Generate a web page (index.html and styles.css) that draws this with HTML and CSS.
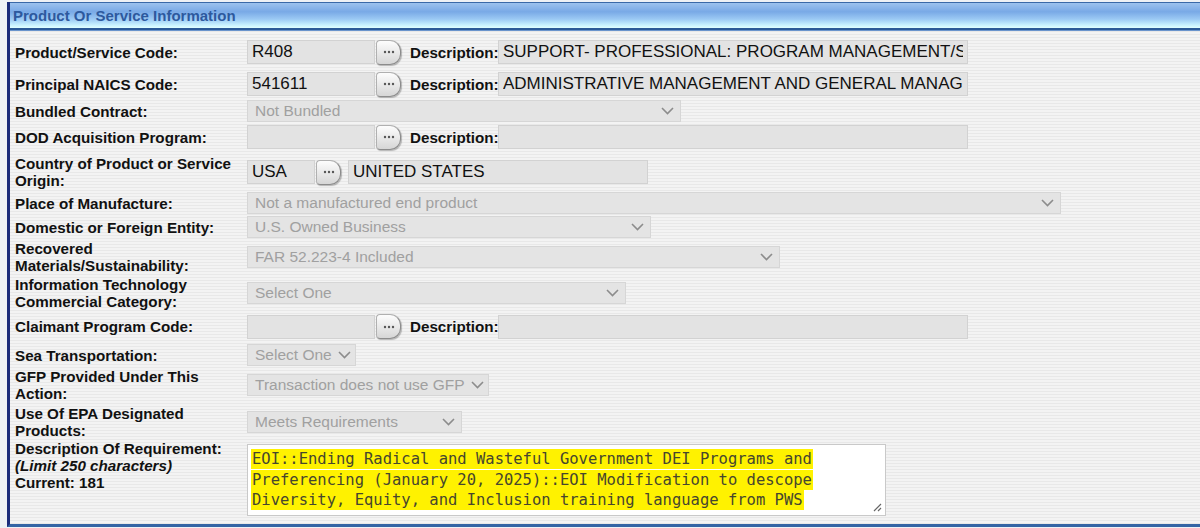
FILE: index.html
```html
<!DOCTYPE html>
<html lang="en">
<head>
    <meta charset="UTF-8">
    <meta name="viewport" content="width=device-width, initial-scale=1.0">
    <title>Product Or Service Information</title>
    <link rel="stylesheet" href="styles.css">
</head>
<body>
    <div class="page">
        <div class="panel">
            <div class="panel-head">Product Or Service Information</div>
            <div class="form-grid">
                <!-- Product/Service Code -->
                <div class="lbl">Product/Service Code:</div>
                <div class="ctl">
                    <input class="txt code" type="text" value="R408" readonly>
                    <span class="picker"><svg width="12" height="4" viewBox="0 0 12 4"><circle cx="2" cy="2" r="1.2"/><circle cx="6" cy="2" r="1.2"/><circle cx="10" cy="2" r="1.2"/></svg></span>
                    <span class="desc-lbl">Description:</span>
                    <input class="txt desc" type="text" value="SUPPORT- PROFESSIONAL: PROGRAM MANAGEMENT/SUPPORT" readonly>
                </div>

                <!-- NAICS -->
                <div class="lbl">Principal NAICS Code:</div>
                <div class="ctl">
                    <input class="txt code" type="text" value="541611" readonly>
                    <span class="picker"><svg width="12" height="4" viewBox="0 0 12 4"><circle cx="2" cy="2" r="1.2"/><circle cx="6" cy="2" r="1.2"/><circle cx="10" cy="2" r="1.2"/></svg></span>
                    <span class="desc-lbl">Description:</span>
                    <input class="txt desc" type="text" value="ADMINISTRATIVE MANAGEMENT AND GENERAL MANAGEMENT CONSULTING SERVICES" readonly>
                </div>

                <div class="lbl">Bundled Contract:</div>
                <div class="ctl">
                    <div class="sel" style="width: 434px">Not Bundled<svg width="13" height="8" viewBox="0 0 13 8"><path d="M1 1l5.5 5.5L12 1"/></svg></div>
                </div>

                <div class="lbl">DOD Acquisition Program:</div>
                <div class="ctl">
                    <input class="txt code" type="text" value="" readonly>
                    <span class="picker"><svg width="12" height="4" viewBox="0 0 12 4"><circle cx="2" cy="2" r="1.2"/><circle cx="6" cy="2" r="1.2"/><circle cx="10" cy="2" r="1.2"/></svg></span>
                    <span class="desc-lbl">Description:</span>
                    <input class="txt desc" type="text" value="" readonly>
                </div>

                <div class="lbl">Country of Product or Service Origin:</div>
                <div class="ctl">
                    <input class="txt country" type="text" value="USA" readonly>
                    <span class="picker"><svg width="12" height="4" viewBox="0 0 12 4"><circle cx="2" cy="2" r="1.2"/><circle cx="6" cy="2" r="1.2"/><circle cx="10" cy="2" r="1.2"/></svg></span>
                    <input class="txt country-name" type="text" value="UNITED STATES" readonly>
                </div>

                <div class="lbl">Place of Manufacture:</div>
                <div class="ctl">
                    <div class="sel" style="width: 814px">Not a manufactured end product<svg width="13" height="8" viewBox="0 0 13 8"><path d="M1 1l5.5 5.5L12 1"/></svg></div>
                </div>

                <div class="lbl">Domestic or Foreign Entity:</div>
                <div class="ctl">
                    <div class="sel" style="width: 404px">U.S. Owned Business<svg width="13" height="8" viewBox="0 0 13 8"><path d="M1 1l5.5 5.5L12 1"/></svg></div>
                </div>

                <div class="lbl">Recovered Materials/Sustainability:</div>
                <div class="ctl">
                    <div class="sel" style="width: 533px">FAR 52.223-4 Included<svg width="13" height="8" viewBox="0 0 13 8"><path d="M1 1l5.5 5.5L12 1"/></svg></div>
                </div>

                <div class="lbl">Information Technology Commercial Category:</div>
                <div class="ctl">
                    <div class="sel" style="width: 379px">Select One<svg width="13" height="8" viewBox="0 0 13 8"><path d="M1 1l5.5 5.5L12 1"/></svg></div>
                </div>

                <div class="lbl">Claimant Program Code:</div>
                <div class="ctl">
                    <input class="txt code" type="text" value="" readonly>
                    <span class="picker"><svg width="12" height="4" viewBox="0 0 12 4"><circle cx="2" cy="2" r="1.2"/><circle cx="6" cy="2" r="1.2"/><circle cx="10" cy="2" r="1.2"/></svg></span>
                    <span class="desc-lbl">Description:</span>
                    <input class="txt desc" type="text" value="" readonly>
                </div>

                <div class="lbl">Sea Transportation:</div>
                <div class="ctl">
                    <div class="sel fit">Select One<svg width="13" height="8" viewBox="0 0 13 8"><path d="M1 1l5.5 5.5L12 1"/></svg></div>
                </div>

                <div class="lbl">GFP Provided Under This Action:</div>
                <div class="ctl">
                    <div class="sel fit">Transaction does not use GFP<svg width="13" height="8" viewBox="0 0 13 8"><path d="M1 1l5.5 5.5L12 1"/></svg></div>
                </div>

                <div class="lbl">Use Of EPA Designated Products:</div>
                <div class="ctl">
                    <div class="sel" style="width: 215px">Meets Requirements<svg width="13" height="8" viewBox="0 0 13 8"><path d="M1 1l5.5 5.5L12 1"/></svg></div>
                </div>

                <div class="lbl top">
                    Description Of Requirement:<br>
                    <i>(Limit 250 characters)</i><br>
                    Current: 181
                </div>
                <div class="ctl top">
                    <div class="memo">
                        <span class="hl">EOI::Ending Radical and Wasteful Government DEI Programs and</span><br>
                        <span class="hl">Preferencing (January 20, 2025)::EOI Modification to descope</span><br>
                        <span class="hl">Diversity, Equity, and Inclusion training language from PWS</span>
                        <svg class="grip" width="10" height="10" viewBox="0 0 10 10"><path d="M9 2L2 9M9 6L6 9"/></svg>
                    </div>
                </div>
            </div>
        </div>
    </div>
</body>
</html>
```

FILE: styles.css
```css
body {
    margin: 0;
    font-family: "Liberation Sans", Arial, sans-serif;
    background-color: #eef1f5;
    color: #111;
}
.page {
    padding: 2px 0 0 7px;
}
.panel {
    height: 525px;
    box-sizing: border-box;
    border-left: 3px solid #1b2b7a;
    border-bottom: 3px solid #3464a4;
    background: repeating-linear-gradient(to bottom, #f3f3f3 0, #f3f3f3 2px, #e8e8e8 2px, #e8e8e8 3px);
}

/* Section title bar */
.panel-head {
    height: 28px;
    box-sizing: border-box;
    padding: 1px 0 0 3px;
    border-top: 1px solid #3a69a8;
    border-bottom: 2px solid #2b5a98;
    box-shadow: 0 1px 0 #6a94cc;
    background: linear-gradient(to bottom, #9cc2ee 0%, #79a9e6 35%, #9ccaf4 65%, #c8f2ff 88%, #e0ffff 100%);
    color: #2d599e;
    font-size: 15px;
    font-weight: bold;
    line-height: 23px;
}

.form-grid {
    display: grid;
    grid-template-columns: 232px 1fr;
    grid-template-rows: 32px 32px 22px 30px 40px 22px 26px 34px 38px 29px 28px 32px 42px auto;
    align-items: center;
    padding: 6px 0 0 5px;
}
.lbl {
    font-size: 15.2px;
    font-weight: bold;
    line-height: 17px;
}
.lbl i {
    font-weight: bold;
}
.ctl {
    display: flex;
    align-items: center;
}
.top {
    align-self: start;
}
.lbl.top {
    margin-top: -3px;
}

/* Text boxes */
.txt {
    height: 24px;
    box-sizing: border-box;
    margin: 0;
    padding: 0 4px;
    border: 1px solid #d2d2d2;
    background-color: #e3e3e3;
    font-family: "Liberation Sans", Arial, sans-serif;
    font-size: 17px;
    color: #111;
    outline: none;
}
.txt.code {
    width: 128px;
}
.txt.desc {
    width: 470px;
}
.txt.country {
    width: 68px;
}
.txt.country-name {
    width: 300px;
    margin-left: 7px;
}

/* Lookup button */
.picker {
    width: 25px;
    height: 25px;
    box-sizing: border-box;
    margin-left: 1px;
    display: flex;
    align-items: center;
    justify-content: center;
    border: 1px solid #b0b0b0;
    border-right-color: #8c8c8c;
    border-bottom-color: #8c8c8c;
    border-radius: 4px 11px 11px 4px;
    background: linear-gradient(to bottom, #fdfdfd, #d6d6d6);
    box-shadow: 1px 1px 1px rgba(0, 0, 0, 0.25);
}
.picker svg {
    fill: #555;
}
.desc-lbl {
    margin-left: 9px;
    width: 88px;
    font-size: 15.2px;
    font-weight: bold;
}

/* Disabled drop-downs */
.sel {
    height: 22px;
    box-sizing: border-box;
    display: flex;
    align-items: center;
    justify-content: space-between;
    padding: 0 6px 0 7px;
    border: 1px solid #d6d6d6;
    background-color: #e4e4e4;
    color: #a0a0a0;
    font-size: 15.5px;
}
.sel.fit {
    gap: 6px;
    padding-right: 4px;
}
.sel svg path {
    fill: none;
    stroke: #8c8c8c;
    stroke-width: 1.6;
}

/* Requirement text area */
.memo {
    position: relative;
    width: 639px;
    height: 72px;
    box-sizing: border-box;
    margin-top: 1px;
    padding: 4px 3px;
    border: 1px solid #c9c9c9;
    background-color: #fff;
    font-family: "DejaVu Sans Mono", "Liberation Mono", monospace;
    font-size: 15.5px;
    line-height: 20.5px;
    color: #46462e;
    white-space: nowrap;
}
.hl {
    background-color: #fff200;
    padding: 1px 1px;
}
.grip {
    position: absolute;
    right: 3px;
    bottom: 3px;
}
.grip path {
    fill: none;
    stroke: #666;
    stroke-width: 1.2;
}
```
